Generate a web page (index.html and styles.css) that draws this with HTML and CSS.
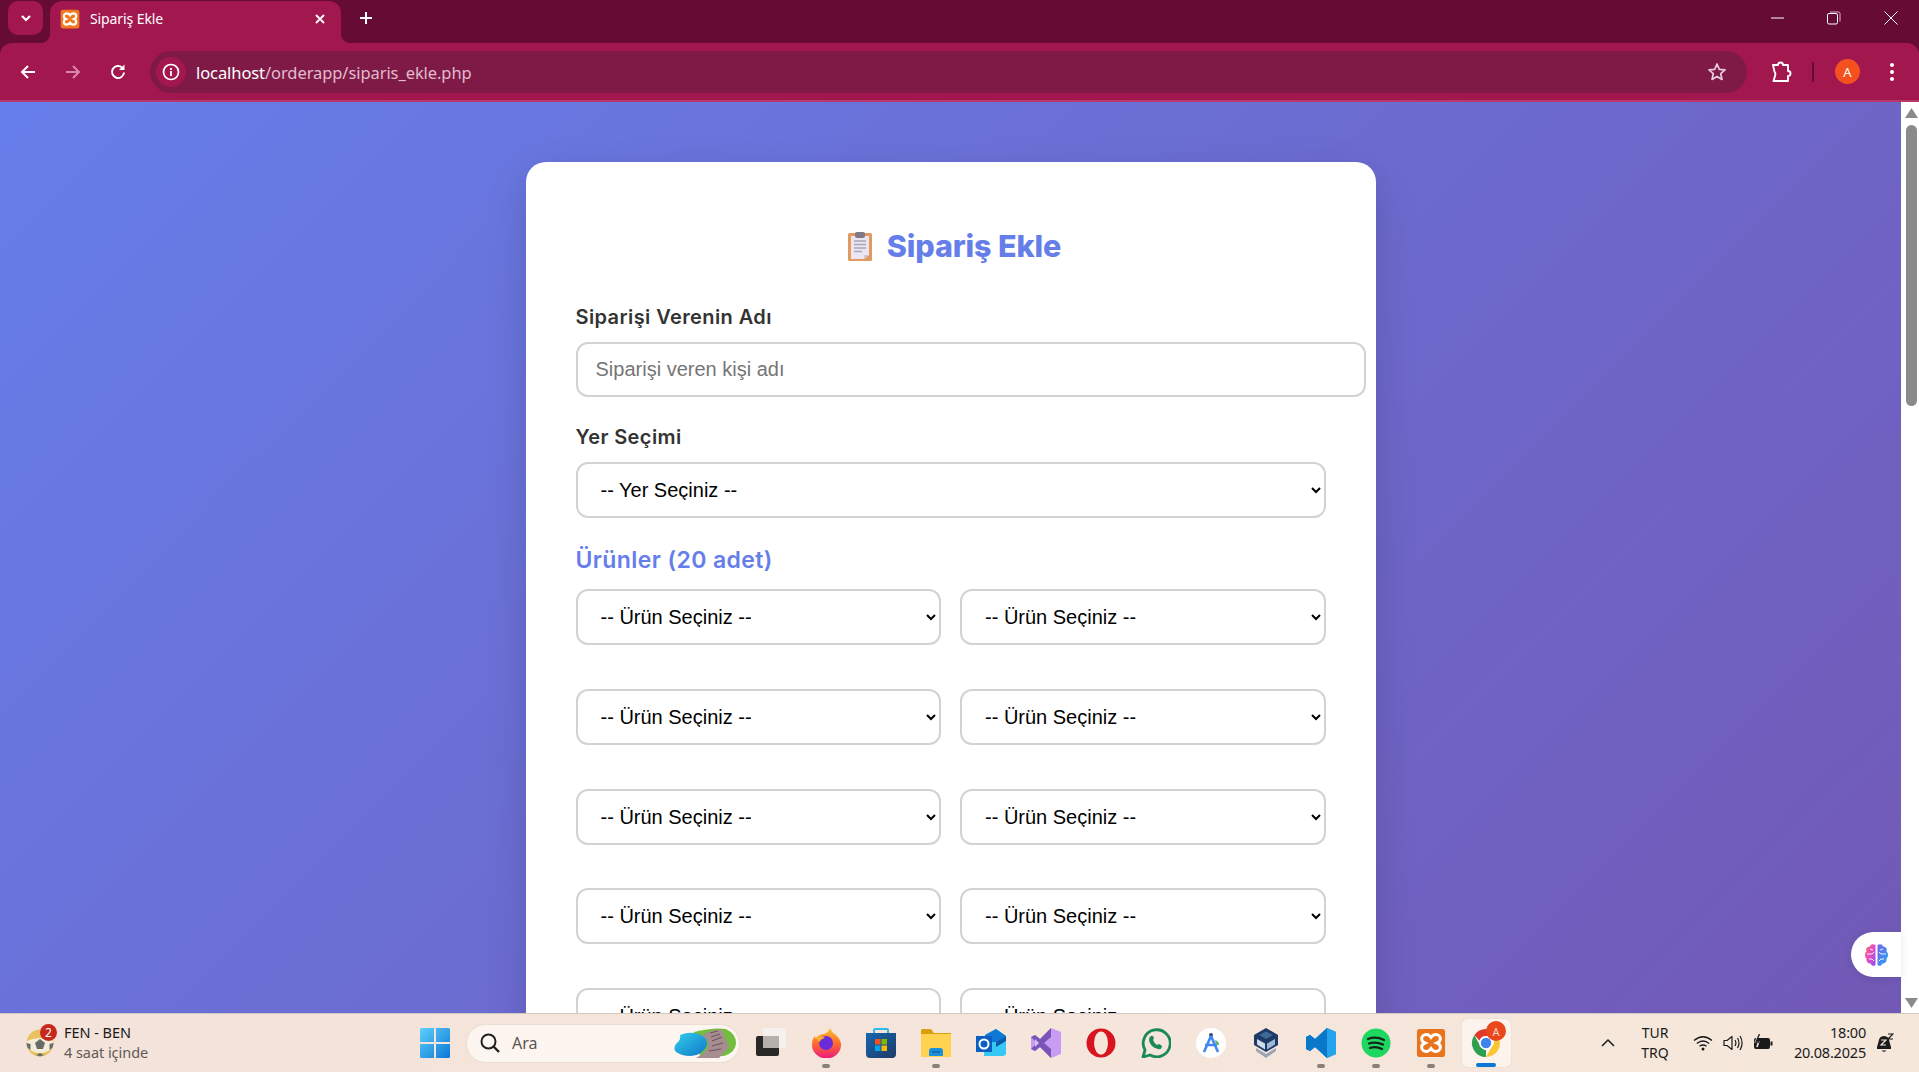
FILE: index.html
```html
<!DOCTYPE html>
<html lang="tr">
<head>
<meta charset="utf-8">
<title>Sipariş Ekle</title>
<link rel="stylesheet" href="styles.css">
</head>
<body>
<header class="tabstrip">
  <button class="tab-list"><svg width="14" height="14" viewBox="0 0 14 14"><path d="M3 5l4 4 4-4" fill="none" stroke="#fff" stroke-width="2.2"/></svg></button>
  <div class="tab">
    <svg class="favicon" viewBox="0 0 32 32"><rect x="1" y="1" width="30" height="30" rx="4" fill="#f07a21"/><path d="M11 7c-3 0-5 2-5 4.500 0 2 1 3.500 3.500 4.500-2.500 1-3.500 2.500-3.500 4.500 0 2.500 2 4.500 5 4.500 2 0 3.500-1 5-3 1.500 2 3 3 5 3 3 0 5-2 5-4.500 0-2-1-3.500-3.500-4.500 2.500-1 3.500-2.500 3.500-4.500 0-2.500-2-4.500-5-4.500-2 0-3.500 1-5 3-1.500-2-3-3-5-3z" fill="none" stroke="#fff" stroke-width="3.400"/></svg>
    <span class="tab-title">Sipariş Ekle</span>
    <svg class="tab-close" width="12" height="12" viewBox="0 0 12 12"><path d="M2 2l8 8M10 2l-8 8" stroke="#fff" stroke-width="1.800"/></svg>
  </div>
  <button class="new-tab"><svg width="14" height="14" viewBox="0 0 14 14"><path d="M7 1v12M1 7h12" stroke="#fff" stroke-width="2"/></svg></button>
  <div class="win-controls">
    <span class="win-btn"><svg width="14" height="14" viewBox="0 0 14 14"><path d="M0 7h13" stroke="#fff"/></svg></span>
    <span class="win-btn"><svg width="14" height="14" viewBox="0 0 14 14"><rect x=".5" y="2.500" width="10" height="10.500" rx="1.500" fill="none" stroke="#fff"/><path d="M3 1h8.500q1.500 0 1.500 1.500v8" fill="none" stroke="#d9b5c6"/></svg></span>
    <span class="win-btn"><svg width="14" height="14" viewBox="0 0 14 14"><path d="M.5.500l13 13M13.500.500l-13 13" stroke="#fff"/></svg></span>
  </div>
</header>
<nav class="toolbar">
  <button class="nav-btn"><svg width="18" height="18" viewBox="0 0 18 18"><path d="M16 9H3M9 3L3 9l6 6" fill="none" stroke="#fff" stroke-width="2"/></svg></button>
  <button class="nav-btn"><svg width="18" height="18" viewBox="0 0 18 18"><path d="M2 9h13M9 3l6 6-6 6" fill="none" stroke="#d58aa9" stroke-width="2"/></svg></button>
  <button class="nav-btn"><svg width="18" height="18" viewBox="0 0 18 18"><path d="M15 9.500A6 6 0 1 1 13 4.500" fill="none" stroke="#fff" stroke-width="2"/><path d="M15.500 1.500v5.500H10z" fill="#fff"/></svg></button>
  <div class="address">
    <span class="info-chip"><svg width="18" height="18" viewBox="0 0 18 18"><circle cx="9" cy="9" r="7.500" fill="none" stroke="#fff" stroke-width="1.700"/><path d="M9 8v5M9 5v2" stroke="#fff" stroke-width="1.800"/></svg></span>
    <span class="url"><span class="url-host">localhost</span>/orderapp/siparis_ekle.php</span>
    <svg class="star" width="20" height="20" viewBox="0 0 20 20"><path d="M10 2l2.300 5.400 5.700.5-4.300 3.800 1.300 5.700-5-3-5 3 1.300-5.700L2 7.900l5.700-.5z" fill="none" stroke="#e7cdd9" stroke-width="1.700" stroke-linejoin="round"/></svg>
  </div>
  <button class="ext-btn"><svg width="22" height="22" viewBox="0 0 22 22"><path d="M3 4h5q0-2.500 2.500-2.500T13 4h5v6q2.500 0 2.500 2.500T18 15v5H3.500L5 15q1-2.500-.5-4.500z" fill="none" stroke="#fff" stroke-width="1.900" stroke-linejoin="round"/></svg></button>
  <span class="tb-sep"></span>
  <span class="avatar">A</span>
  <button class="menu-btn"><svg width="6" height="20" viewBox="0 0 6 20"><circle cx="3" cy="3" r="2" fill="#fff"/><circle cx="3" cy="10" r="2" fill="#fff"/><circle cx="3" cy="17" r="2" fill="#fff"/></svg></button>
</nav>
<div class="viewport">
  <main class="page">
    <section class="card">
      <h1 class="title"><svg class="clipboard" viewBox="0 0 24 30"><rect x="0" y="2" width="24" height="28" rx="1.500" fill="#e39a61"/><path d="M3 5h18v19l-5 4H3z" fill="#ebe6f2"/><path d="M16 28l5-4h-5z" fill="#cfc6d8"/><rect x="7" y="1" width="10" height="6" rx="2" fill="#7f7a86"/><path d="M6 10h12M6 13.500h12M6 17h12M6 20.500h8" stroke="#aba5b4" stroke-width="1.400"/></svg><span>Sipariş Ekle</span></h1>
      <label class="label">Siparişi Verenin Adı</label>
      <input class="text-input" type="text" placeholder="Siparişi veren kişi adı">
      <label class="label label-second">Yer Seçimi</label>
      <select class="select"><option>-- Yer Seçiniz --</option></select>
      <h2 class="section">Ürünler (20 adet)</h2>
      <div class="products">
        <select class="select"><option>-- Ürün Seçiniz --</option></select>
        <select class="select"><option>-- Ürün Seçiniz --</option></select>
        <select class="select"><option>-- Ürün Seçiniz --</option></select>
        <select class="select"><option>-- Ürün Seçiniz --</option></select>
        <select class="select"><option>-- Ürün Seçiniz --</option></select>
        <select class="select"><option>-- Ürün Seçiniz --</option></select>
        <select class="select"><option>-- Ürün Seçiniz --</option></select>
        <select class="select"><option>-- Ürün Seçiniz --</option></select>
        <select class="select"><option>-- Ürün Seçiniz --</option></select>
        <select class="select"><option>-- Ürün Seçiniz --</option></select>
        <select class="select"><option>-- Ürün Seçiniz --</option></select>
        <select class="select"><option>-- Ürün Seçiniz --</option></select>
        <select class="select"><option>-- Ürün Seçiniz --</option></select>
        <select class="select"><option>-- Ürün Seçiniz --</option></select>
        <select class="select"><option>-- Ürün Seçiniz --</option></select>
        <select class="select"><option>-- Ürün Seçiniz --</option></select>
        <select class="select"><option>-- Ürün Seçiniz --</option></select>
        <select class="select"><option>-- Ürün Seçiniz --</option></select>
        <select class="select"><option>-- Ürün Seçiniz --</option></select>
        <select class="select"><option>-- Ürün Seçiniz --</option></select>
      </div>
    </section>
  </main>
  <div class="float-widget"><svg width="25" height="24" viewBox="0 0 25 24"><defs><linearGradient id="brainL" x1="0" y1="0" x2="1" y2="1"><stop offset="0" stop-color="#f5683f"/><stop offset=".45" stop-color="#e84fc4"/><stop offset="1" stop-color="#8a4df0"/></linearGradient><linearGradient id="brainR" x1="0" y1="0" x2="1" y2="1"><stop offset="0" stop-color="#7a63f2"/><stop offset="1" stop-color="#1fa8f0"/></linearGradient></defs><path d="M11.500 2C9.500.500 6.500 1 6 3.500 3 3.500 1.500 6 2.500 8.500.500 10 .500 14 2.500 15.500c-.5 3 1.500 5 4 5 1 2.500 3.500 3 5 1.500z" fill="url(#brainL)"/><path d="M13.500 2c2-1.500 5-1 5.500 1.500 3 0 4.500 2.500 3.500 5 2 1.500 2 5.500 0 7 .5 3-1.500 5-4 5-1 2.500-3.500 3-5 1.500z" fill="url(#brainR)"/><path d="M3 11h5l2-2M6 6l3 1M5 16h3l2 2M22 11h-5l-2-2M19 6l-3 1M20 16h-3l-2 2" fill="none" stroke="#fff" stroke-width=".9"/></svg></div>
  <aside class="scrollbar">
    <svg class="sb-arrow" width="13" height="10" viewBox="0 0 13 10"><path d="M6.500 0L13 10H0z" fill="#8a8a8a"/></svg>
    <span class="sb-thumb"></span>
    <svg class="sb-arrow sb-down" width="13" height="10" viewBox="0 0 13 10"><path d="M6.500 10L13 0H0z" fill="#8a8a8a"/></svg>
  </aside>
</div>
<footer class="taskbar">
  <div class="news">
    <span class="news-icon">
      <svg width="28" height="28" viewBox="0 0 28 28"><circle cx="14" cy="14" r="13.500" fill="#e9c25e"/><path d="M1 12Q14 6 27 12V19Q14 29 1 19z" fill="#f3ecd9"/><path d="M14 10l5 4-2 6h-6l-2-6z" fill="#6a6a6a"/><path d="M.5 14l4 1 0 6-3-2zM27.500 14l-4 1 0 6 3-2zM10 26l4-2 4 2-4 1.500z" fill="#6a6a6a"/></svg>
      <span class="news-badge">2</span>
    </span>
    <span class="news-text"><span class="news-title">FEN - BEN</span><span class="news-sub">4 saat içinde</span></span>
  </div>
  <div class="start"><svg width="30" height="30" viewBox="0 0 30 30"><defs><linearGradient id="winB" x1="0" y1="0" x2="1" y2="1"><stop offset="0" stop-color="#5fd0fa"/><stop offset="1" stop-color="#0a78d6"/></linearGradient></defs><path d="M0 1.500Q0 0 1.500 0h12.500v14H0zM16 0h12.500Q30 0 30 1.500V14H16zM0 16h14v14H1.500Q0 30 0 28.500zM16 16h14v12.500Q30 30 28.500 30H16z" fill="url(#winB)"/></svg></div>
  <div class="search">
    <svg width="22" height="22" viewBox="0 0 22 22"><circle cx="9.500" cy="9.500" r="7" fill="none" stroke="#222" stroke-width="2"/><path d="M14.500 14.500L20 20" stroke="#222" stroke-width="2.400"/></svg>
    <span class="search-text">Ara</span>
    <svg class="search-art" width="62" height="30" viewBox="0 0 62 30"><defs><linearGradient id="artB" x1="0" y1="0" x2="1" y2="1"><stop offset="0" stop-color="#2fd0ea"/><stop offset="1" stop-color="#1276c8"/></linearGradient></defs><path d="M20 4Q40-1 52 1q10 5 10 14 0 9-12 13H26z" fill="#72bd3c"/><path d="M28 7Q40 1 48 2l7 17-10 11H22q12-6 12-13 0-6-6-10z" fill="#a68d90"/><path d="M36 5l8-2M37 9l9-3M38 13l10-4M38 18l11-3M35 23l12-2" stroke="#6d5560" stroke-width="1.200"/><path d="M6 7q10-4 18-1 10 3 9 11-4 10-16 11Q6 28 1 23-1 18 4 14q3-3 2-7z" fill="url(#artB)"/></svg>
  </div>
  <div class="task task-view"><svg width="30" height="30" viewBox="0 0 30 30"><rect x="7" y="0" width="23" height="20" rx="2" fill="#f4f1ee"/><rect x="0" y="8" width="23" height="20" rx="2" fill="#2a2826"/><rect x="7" y="8" width="16" height="12" fill="#b5b0ac"/></svg></div>
  <div class="task has-dot"><svg width="30" height="30" viewBox="0 0 30 30"><defs><linearGradient id="fx" x1="0" y1="0" x2="0" y2="1"><stop offset="0" stop-color="#ffc02e"/><stop offset=".5" stop-color="#ff6c2c"/><stop offset="1" stop-color="#ec1a7e"/></linearGradient></defs><path d="M19 0q2 5 6 7 5 5 5 10a14 13 0 0 1-29 0q0-6 3-9l1 3q3-5 8-5 4-1 6-6z" fill="url(#fx)"/><circle cx="15" cy="15" r="7" fill="#6a2bd9"/><path d="M5 9q5-2 9 1-5 1-5 4-3-1-4-5z" fill="#ffad30"/></svg></div>
  <div class="task"><svg width="30" height="30" viewBox="0 0 30 30"><defs><linearGradient id="st" x1="0" y1="0" x2="1" y2="1"><stop offset="0" stop-color="#1767ae"/><stop offset="1" stop-color="#1e3a68"/></linearGradient></defs><path d="M8 6V2q0-1 1-1h12q1 0 1 1v4" fill="none" stroke="#2fb9e8" stroke-width="2"/><path d="M0 5h30v21q0 4-4 4H4q-4 0-4-4z" fill="url(#st)"/><rect x="9" y="11" width="5.500" height="5.500" fill="#f25022"/><rect x="15.500" y="11" width="5.500" height="5.500" fill="#7fba00"/><rect x="9" y="17.500" width="5.500" height="5.500" fill="#00a4ef"/><rect x="15.500" y="17.500" width="5.500" height="5.500" fill="#ffb900"/></svg></div>
  <div class="task has-dot"><svg width="30" height="28" viewBox="0 0 30 28"><path d="M0 1.500Q0 0 1.500 0H10l3 4h17v24H0z" fill="#dba009"/><path d="M0 5h30v23H0z" fill="#ffd24f"/><path d="M8 27v-5q0-3 3-3h8q3 0 3 3v5z" fill="#1a8fdd"/><path d="M11 23h8" stroke="#0c5a9e" stroke-width="1.200"/></svg></div>
  <div class="task"><svg width="30" height="28" viewBox="0 0 30 28"><path d="M9 6l11-6 10 7v14a4 4 0 0 1-4 6H8z" fill="#35c8f4"/><path d="M9 6l11-6 10 7-10 6H9z" fill="#0f78d4"/><path d="M20 13l10-6v5l-10 6z" fill="#0a5aa8"/><rect x="0" y="7" width="16" height="16" fill="#0b5fc0"/><circle cx="8" cy="15" r="4.500" fill="none" stroke="#fff" stroke-width="2"/></svg></div>
  <div class="task"><svg width="30" height="30" viewBox="0 0 30 30"><path d="M20 0l10 4v22l-10 4-11-11-5 4-4-2V9l4-2 5 4z" fill="#c79cf2"/><path d="M20 0v9l-7 6 7 6v9L9 19l-5 4-4-2 6-6-6-6 4-2 5 4z" fill="#7a55b8"/><path d="M4 11v8l4-4z" fill="#d8c0f6"/></svg></div>
  <div class="task"><svg width="30" height="30" viewBox="0 0 30 30"><ellipse cx="15" cy="15" rx="14.500" ry="14.500" fill="#d8141f"/><ellipse cx="15" cy="15" rx="7" ry="11.500" fill="#f6e6da"/></svg></div>
  <div class="task"><svg width="30" height="30" viewBox="0 0 30 30"><path d="M2 29l2-7A13.500 13.500 0 1 1 9 27z" fill="none" stroke="#1a8a55" stroke-width="2.800" stroke-linejoin="round"/><path d="M10 8q2-1 3 2l-1 2q1 3 4 5l2-1q3 1 3 3-1 3-4 2-8-2-9-9 0-3 2-4z" fill="#1a8a55"/></svg></div>
  <div class="task"><svg width="30" height="30" viewBox="0 0 30 30"><circle cx="15" cy="15" r="15" fill="#fff"/><circle cx="15" cy="7" r="2" fill="#3a4a6a"/><path d="M15 8L8 24M15 8l7 16M9 17h12" fill="none" stroke="#4285f4" stroke-width="2.600"/><path d="M19 12q4 1 4 5l-3 0z" fill="#5fb46a"/></svg></div>
  <div class="task"><svg width="30" height="30" viewBox="0 0 30 30"><path d="M3 7l12-7 12 7v10L15 24 3 17z" fill="#1d3a66"/><path d="M6 11l8 4.500v6L6 16.500z" fill="#cfdcec"/><path d="M24 11l-8 4.500v6l8-5z" fill="#9db8d6"/><path d="M8 7l7-3.500L22 7l-7 4z" fill="#3d6898"/><path d="M5 20l10 6 10-6v3l-10 7-10-7z" fill="#9aa4b4"/></svg></div>
  <div class="task has-dot"><svg width="30" height="30" viewBox="0 0 30 30"><path d="M21 0l9 4v22l-9 4-12-11-5 4-4-2V9l4-2 5 4z" fill="#0a78c8"/><path d="M21 0l9 4v22l-9 4z" fill="#25a4ee"/><path d="M21 8L12 15l9 7v8L9 19l-5 4-4-2 5.500-6L0 9l4-2 5 4L21 0z" fill="#0a78c8"/></svg></div>
  <div class="task has-dot"><svg width="30" height="30" viewBox="0 0 30 30"><circle cx="15" cy="15" r="14.500" fill="#1ed760"/><path d="M7 11q8-3 16 1M8 15.500q7-2 14 1M9 20q6-2 12 1" fill="none" stroke="#14261a" stroke-width="2.300" stroke-linecap="round"/></svg></div>
  <div class="task has-dot"><svg width="30" height="30" viewBox="0 0 32 32"><rect x="1" y="1" width="30" height="30" rx="3" fill="#e8741e"/><path d="M11 7c-3 0-5 2-5 4.500 0 2 1 3.500 3.500 4.500-2.500 1-3.500 2.500-3.500 4.500 0 2.500 2 4.500 5 4.500 2 0 3.500-1 5-3 1.500 2 3 3 5 3 3 0 5-2 5-4.500 0-2-1-3.500-3.500-4.500 2.500-1 3.500-2.500 3.500-4.500 0-2.500-2-4.500-5-4.500-2 0-3.500 1-5 3-1.500-2-3-3-5-3z" fill="none" stroke="#fff" stroke-width="3.200"/></svg></div>
  <div class="task task-active"><span class="chrome-wrap"><svg width="30" height="30" viewBox="0 0 30 30"><path d="M15 1a14 14 0 0 1 12.100 7H15a7 7 0 0 0-6.500 4.400L3.300 7.300A14 14 0 0 1 15 1z" fill="#e0392b"/><path d="M27.100 8A14 14 0 0 1 15 29l6-10.500a7 7 0 0 0 0-10.500z" fill="#f8c62e"/><path d="M15 29A14 14 0 0 1 3.300 7.300l6 10.700A7 7 0 0 0 15 22z" fill="#2e9e4f"/><circle cx="15" cy="15" r="6" fill="#3f83ee" stroke="#fff" stroke-width="1.600"/></svg><span class="chrome-badge">A</span></span></div>
  <div class="tray">
    <span class="tray-chevron"><svg width="16" height="10" viewBox="0 0 16 10"><path d="M2 8l6-6 6 6" fill="none" stroke="#1a1a1a" stroke-width="1.500"/></svg></span>
    <span class="tray-lang"><span>TUR</span><span>TRQ</span></span>
    <span class="tray-icon tray-wifi"><svg width="20" height="16" viewBox="0 0 20 16"><path d="M1 5.500q9-7.500 18 0M3.800 8.500q6.200-5 12.400 0M6.500 11.300q3.500-2.600 7 0" fill="none" stroke="#1a1a1a" stroke-width="1.300"/><circle cx="10" cy="14" r="1.500" fill="#1a1a1a"/></svg></span>
    <span class="tray-icon"><svg width="20" height="18" viewBox="0 0 20 18"><path d="M1 6.500h3L9 2.500v13L4 11.500H1z" fill="none" stroke="#1a1a1a" stroke-width="1.200" stroke-linejoin="round"/><path d="M12 6q1.800 3 0 6M14.500 4q3 5 0 10M17 2q4.200 7 0 14" fill="none" stroke="#1a1a1a" stroke-width="1.200"/></svg></span>
    <span class="tray-icon"><svg width="20" height="18" viewBox="0 0 20 18"><rect x="1" y="4" width="16" height="11" rx="2" fill="#1a1a1a"/><rect x="17.500" y="7.500" width="2" height="4" fill="#1a1a1a"/><path d="M6 0L2.500 8h3L4 13" fill="none" stroke="#f6e6da" stroke-width="1.600"/><path d="M6.500 0L3 8h3" fill="none" stroke="#1a1a1a" stroke-width="1.300"/></svg></span>
    <span class="clock"><span>18:00</span><span>20.08.2025</span></span>
    <span class="tray-bell"><svg width="18" height="20" viewBox="0 0 18 20"><path d="M8 3q-5 0-5.500 6L1 14v2h14v-2l-1.500-5q-.5-6-5.500-6z" fill="#1a1a1a"/><path d="M5.500 17.500q2.500 2.500 5 0z" fill="#1a1a1a"/><path d="M5 7h5l-5 5h5" fill="none" stroke="#f6e6da" stroke-width="1.200"/><path d="M12 1h5l-5 5h5" fill="none" stroke="#1a1a1a" stroke-width="1.200"/></svg></span>
  </div>
</footer>
</body>
</html>
```
FILE: styles.css
```css
* { box-sizing: border-box; }
html, body { margin: 0; height: 100%; overflow: hidden; }
body {
  display: flex;
  flex-direction: column;
  height: 1072px;
  font-family: "Noto Sans", "Liberation Sans", sans-serif;
  background: #660b34;
}
button { border: 0; padding: 0; background: none; display: flex; align-items: center; justify-content: center; }

/* tab strip */
.tabstrip { height: 43px; flex: none; display: flex; padding-left: 8px; background: #660b34; }
.tab-list { width: 35px; height: 34px; margin-top: 1px; border-radius: 10px; background: #a3174f; }
.tab {
  position: relative;
  width: 291px;
  height: 42px;
  margin: 1px 0 0 7px;
  padding: 0 15px 0 10px;
  display: flex;
  align-items: center;
  border-radius: 12px 12px 0 0;
  background: #a3174f;
  color: #fff;
}
.tab::before, .tab::after { content: ""; position: absolute; bottom: 0; width: 10px; height: 10px; }
.tab::before { left: -10px; background: radial-gradient(circle at 0 0, transparent 10px, #a3174f 10.500px); }
.tab::after { right: -10px; background: radial-gradient(circle at 100% 0, transparent 10px, #a3174f 10.500px); }
.favicon { width: 20px; height: 20px; margin-top: -6px; }
.tab-title { margin: -8px 0 0 10px; font-size: 14px; letter-spacing: -.1px; flex: 1; }
.tab-close { margin-top: -6px; }
.new-tab { width: 30px; height: 36px; margin-left: 10px; }
.win-controls { margin-left: auto; display: flex; }
.win-btn { width: 57px; height: 36px; display: flex; align-items: center; justify-content: center; }
.win-btn:first-child { padding-left: 2px; }

/* toolbar */
.toolbar {
  height: 59px;
  flex: none;
  display: flex;
  align-items: center;
  padding: 0 0 2px 5px;
  border-radius: 12px 12px 0 0;
  background: #a3174f;
  box-shadow: inset 0 -2px 0 #b8386c;
}
.nav-btn { width: 45px; height: 36px; }
.address {
  width: 1597px;
  height: 42px;
  margin-left: 10px;
  padding: 0 20px 0 6px;
  display: flex;
  align-items: center;
  border-radius: 21px;
  background: #7f1a47;
}
.info-chip { width: 30px; height: 30px; display: flex; align-items: center; justify-content: center; border-radius: 50%; background: #a3174f; }
.url { margin-left: 10px; padding-top: 1px; font-size: 16.500px; letter-spacing: -.08px; color: #e2bccd; }
.url-host { color: #fff; }
.star { margin-left: auto; }
.ext-btn { width: 40px; height: 36px; margin-left: 14px; }
.tb-sep { width: 2px; height: 20px; margin-left: 11px; border-radius: 1px; background: #660b34; }
.avatar {
  width: 25px;
  height: 25px;
  margin-left: 21px;
  display: flex;
  align-items: center;
  justify-content: center;
  border-radius: 50%;
  background: #f4511e;
  color: #fff;
  font-size: 13px;
}
.menu-btn { width: 20px; height: 36px; margin-left: 22px; }

/* page viewport */
.viewport { position: relative; flex: 1; min-height: 0; display: flex; overflow: hidden; }
.page {
  flex: 1;
  min-width: 0;
  align-self: flex-start;
  padding: 60px 0;
  background: linear-gradient(135deg, #667eea 0%, #764ba2 100%);
}
.card {
  width: 850px;
  margin: 0 auto;
  padding: 60px 50px 460px;
  border-radius: 20px;
  background: #fff;
  box-shadow: 0 15px 40px rgba(0, 0, 0, .15);
  font-family: Inter, "Liberation Sans", sans-serif;
}
.title {
  margin: 0 0 33px;
  padding-left: 10px;
  display: flex;
  align-items: center;
  justify-content: center;
  gap: 15px;
  font-size: 30.500px;
  line-height: 48px;
  font-weight: 800;
  letter-spacing: -.1px;
  color: #667eea;
}
.clipboard { width: 24px; height: 30px; margin-left: -2px; }
.label { display: block; font-size: 20px; line-height: 28px; font-weight: 600; letter-spacing: .4px; color: #333; margin-bottom: 10.500px; }
.label-second { margin: 26px 0 11px; }
.text-input, .select {
  border: 2px solid #d2d2d2;
  border-radius: 12px;
  background: #fff;
  font-family: "Liberation Sans", Arial, sans-serif;
  font-size: 20px;
  padding: 15px 18px;
}
.text-input { display: block; width: 790px; height: 55.500px; color: #333; outline: 0; }
.text-input::placeholder { color: #757575; }
.select { display: block; width: 100%; height: 56px; color: #000; padding: 14px 18px 16px 19px; }
.section { margin: 22.500px 0 10.500px; font-size: 23px; line-height: 38px; font-weight: 600; letter-spacing: .4px; color: #667eea; }
.products { display: grid; grid-template-columns: 365.500px 365.500px; column-gap: 19px; row-gap: 43.750px; }

.float-widget {
  position: absolute;
  top: 830px;
  right: 18px;
  width: 50px;
  height: 45px;
  display: flex;
  align-items: center;
  justify-content: flex-end;
  padding-right: 12px;
  border-radius: 23px 0 0 23px;
  background: #fff;
  box-shadow: 0 2px 10px rgba(0, 0, 0, .1);
}

.scrollbar { width: 18px; flex: none; display: flex; flex-direction: column; align-items: center; background: #fff; padding-top: 6px; }
.sb-arrow { flex: none; margin-left: 3px; }
.sb-thumb { width: 11px; height: 281px; margin: 7px 0 0 3px; border-radius: 6px; background: #8a8a8a; }
.sb-down { margin-top: auto; margin-bottom: 5px; }

/* taskbar */
.taskbar {
  height: 59px;
  flex: none;
  display: flex;
  align-items: center;
  padding-left: 26px;
  border-top: 1px solid #cfc8c3;
  background: linear-gradient(90deg, #f4e3da, #f6e7db);
  color: #1a1a1a;
}
.news { width: 381px; display: flex; align-items: center; }
.news-icon { position: relative; width: 28px; height: 28px; }
.news-badge {
  position: absolute;
  top: -5px;
  left: 14px;
  width: 17px;
  height: 17px;
  display: flex;
  align-items: center;
  justify-content: center;
  border-radius: 50%;
  background: #c8271c;
  color: #fff;
  font-size: 12px;
}
.news-text { margin: -2px 0 0 10px; display: flex; flex-direction: column; font-size: 14.500px; line-height: 20px; letter-spacing: -.05px; }
.news-sub { color: #5f5a56; }
.start { width: 55px; display: flex; justify-content: center; }
.search {
  width: 274px;
  height: 39px;
  margin-left: 4px;
  padding: 0 3px 0 12px;
  display: flex;
  align-items: center;
  border-radius: 20px;
  border: 1px solid #eaddd2;
  background: #fdf6f0;
}
.search-text { margin-left: 11px; font-size: 16px; color: #5a5551; }
.search-art { margin-left: auto; }
.task { position: relative; width: 55px; height: 100%; flex: none; display: flex; align-items: center; justify-content: center; }
.task-view { width: 58.500px; padding-left: 3px; }
.has-dot::after { content: ""; position: absolute; left: 50%; bottom: 4px; width: 8px; height: 4px; margin-left: -4px; border-radius: 2px; background: #8a807a; }
.task-active::before { content: ""; position: absolute; left: 3px; right: 3px; top: 5px; bottom: 5px; border-radius: 5px; background: #fcf3ed; box-shadow: 0 0 1px rgba(0, 0, 0, .2); }
.task-active::after { content: ""; position: absolute; left: 17px; width: 20px; bottom: 5px; height: 4px; border-radius: 2px; background: #0a78d4; }
.chrome-wrap { position: relative; width: 30px; height: 30px; }
.chrome-badge {
  position: absolute;
  top: -7px;
  right: -5px;
  width: 20px;
  height: 20px;
  display: flex;
  align-items: center;
  justify-content: center;
  border-radius: 50%;
  background: #e8481c;
  color: #fbd6c8;
  font-size: 11px;
}
.tray { margin-left: auto; padding-right: 19px; display: flex; align-items: center; font-size: 14px; }
.tray-chevron { width: 30px; display: flex; justify-content: center; }
.tray-lang { width: 50px; margin-left: 7px; display: flex; flex-direction: column; align-items: center; line-height: 20px; }
.tray-icon { width: 30px; display: flex; justify-content: center; }
.tray-wifi { margin-left: 8px; }
.clock { width: 88px; margin-top: -2px; display: flex; flex-direction: column; align-items: flex-end; font-size: 14.500px; line-height: 20px; letter-spacing: -.2px; }
.tray-bell { width: 30px; margin-left: 4px; display: flex; justify-content: center; }
```
